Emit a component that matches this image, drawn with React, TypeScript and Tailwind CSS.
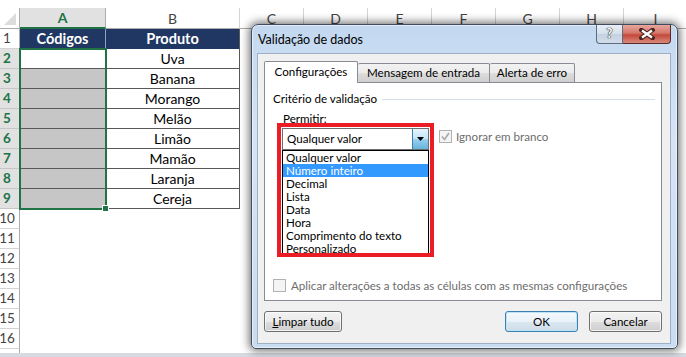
import React from "react";
import clsx from "clsx";

const products = ["Uva", "Banana", "Morango", "Melão", "Limão", "Mamão", "Laranja", "Cereja"];
const otherCols = ["C", "D", "E", "F", "G", "H", "I"];
const options = [
  "Qualquer valor",
  "Número inteiro",
  "Decimal",
  "Lista",
  "Data",
  "Hora",
  "Comprimento do texto",
  "Personalizado",
];

// Row number cell on the left edge of the sheet
const RowHeader = ({ n, selected }: { n: number; selected?: boolean }) => (
  <div
    className={clsx(
      "w-[20px] h-full shrink-0 border-r border-b flex items-center justify-center pr-[5px] text-[13.5px]",
      selected
        ? "bg-[#e1e1e1] text-[#217346] font-bold border-b-[#c6c6c6] border-r-[#ababab]"
        : "bg-white text-[#444] border-b-[#d4d4d4] border-r-[#ababab]"
    )}
  >
    {n}
  </div>
);

const Sheet = () => {
  return (
    <div className="relative flex flex-col [font-family:Lato,sans-serif]">
      <div className="h-[8px] bg-white" />

      {/* Column headers */}
      <div className="flex h-[21px] text-[14px] text-[#444]">
        <div className="w-[20px] shrink-0 border-r border-b border-[#ababab] bg-white relative">
          <svg width="19" height="20" className="absolute left-0 top-0">
            <polygon points="4,17 16,5 16,17" fill="#dcdcdc" />
          </svg>
        </div>
        <div className="w-[86px] shrink-0 flex items-center justify-center bg-[#e1e1e1] border-r border-r-[#ababab] border-b-2 border-b-[#217346] text-[#217346] font-bold">
          A
        </div>
        <div className="w-[134px] shrink-0 flex items-center justify-center bg-white border-r border-b border-[#d4d4d4] border-b-[#ababab]">
          B
        </div>
        {otherCols.map((c) => (
          <div
            key={c}
            className="w-[64px] shrink-0 flex items-center justify-center bg-white border-r border-b border-[#d4d4d4] border-b-[#ababab]"
          >
            {c}
          </div>
        ))}
      </div>

      {/* Row 1 - table header */}
      <div className="flex h-[20px]">
        <RowHeader n={1} />
        <div className="w-[86px] shrink-0 bg-[#203764] border-r border-[#8ea0bd] flex items-center justify-center text-white font-bold text-[14.5px]">
          Códigos
        </div>
        <div className="w-[134px] shrink-0 bg-[#203764] border-r border-[#595959] flex items-center justify-center text-white font-bold text-[14.5px]">
          Produto
        </div>
        <div className="flex-1 bg-white" />
      </div>

      {/* Rows 2-9 - data */}
      {products.map((p, i) => (
        <div key={p} className="flex h-[20px]">
          <RowHeader n={i + 2} selected />
          <div
            className={clsx(
              "w-[86px] shrink-0 border-r border-b border-[#595959]",
              i === 0 ? "bg-white" : "bg-[#c6c6c6]"
            )}
          />
          <div className="w-[134px] shrink-0 border-r border-b border-[#595959] bg-white flex items-center justify-center text-[14px] text-black">
            {p}
          </div>
          <div className="flex-1 bg-white" />
        </div>
      ))}

      {/* Rows 10-16 - empty */}
      {[10, 11, 12, 13, 14, 15, 16].map((n) => (
        <div key={n} className="flex h-[20px]">
          <RowHeader n={n} />
          <div className="flex-1 bg-white" />
        </div>
      ))}
      <div className="flex h-[4px]">
        <div className="w-[20px] border-r border-[#ababab] bg-white" />
        <div className="flex-1 bg-white" />
      </div>
      <div className="h-[4px] bg-[#d6dbe2]" />

      {/* Selection A2:A9 */}
      <div className="absolute left-[19px] top-[48px] w-[88px] h-[162px] border-2 border-[#217346] pointer-events-none" />
      <div className="absolute left-[102px] top-[205px] w-[7px] h-[7px] bg-[#217346] border border-white" />
    </div>
  );
};

const Checkbox = ({ checked }: { checked?: boolean }) => (
  <div className="w-[13px] h-[13px] shrink-0 border border-[#b1b1b1] bg-[#f4f4f4] flex items-center justify-center">
    {checked && (
      <svg width="9" height="9" viewBox="0 0 9 9">
        <path d="M1 4.5 L3.5 7.5 L8 1" fill="none" stroke="#a8a8a8" strokeWidth="1.6" />
      </svg>
    )}
  </div>
);

const winButton =
  "h-[21px] rounded-[3px] border text-[11.6px] text-black flex items-center justify-center";
const winButtonBg =
  "border-[#707070] bg-[linear-gradient(to_bottom,#f2f2f2_0%,#ebebeb_50%,#dddddd_51%,#cfcfcf_100%)] shadow-[inset_0_0_0_1px_rgba(255,255,255,0.7)]";

const Dialog = () => {
  return (
    <div className="absolute left-[251px] top-[24px] w-[427px] h-[325px] flex flex-col pl-[5px] pr-[6px] pb-[4px] rounded-t-[7px] rounded-b-[5px] border border-[#3e4c5e] bg-[linear-gradient(to_bottom,#c3d8f0,#d5e4f5_35%,#cadcf1)] shadow-[inset_0_0_0_1px_rgba(255,255,255,0.55),0_0_9px_2px_rgba(0,0,0,0.55)] [font-family:Lato,sans-serif] z-10">
      {/* Title bar */}
      <div className="relative h-[28px] flex items-center pl-[1px] pt-[2px] text-[12.5px] text-black">
        Validação de dados
        <div className="absolute right-0 top-0 flex">
          <div className="w-[27px] h-[19px] rounded-bl-[4px] border border-t-0 border-[#5d6b7e] bg-[linear-gradient(to_bottom,#e8eef6,#d5e0ec_50%,#c3d1e1_51%,#d2dde9)] flex items-center justify-center text-[13px] font-bold text-white [text-shadow:0_0_1px_#2a2a2a,0_0_1px_#2a2a2a,0_0_1px_#2a2a2a]">
            ?
          </div>
          <div className="w-[48px] h-[19px] rounded-br-[4px] border border-t-0 border-l-0 border-[#5a2a28] bg-[linear-gradient(to_bottom,#e8a69c,#d5776b_45%,#c4483b_55%,#d88a7c)] flex items-center justify-center">
            <svg width="16" height="12" viewBox="0 0 16 12">
              <path d="M2.5 2 L13.5 10 M13.5 2 L2.5 10" stroke="#4b2320" strokeWidth="4.5" strokeLinecap="square" />
              <path d="M3 2.5 L13 9.5 M13 2.5 L3 9.5" stroke="#ffffff" strokeWidth="2.4" />
            </svg>
          </div>
        </div>
      </div>

      {/* Client area */}
      <div className="flex-1 flex flex-col bg-[#f0f0f0] border border-[#9fb0c4] pl-[6px] pr-[8px] pt-[7px] text-[11.6px] text-black">
        {/* Tabs */}
        <div className="flex items-end h-[21px]">
          <div className="relative z-10 w-[94px] h-[22px] -mb-px bg-white border border-b-0 border-[#898c95] rounded-t-[2px] flex items-center justify-center pb-[2px]">
            Configurações
          </div>
          <div className="w-[132px] h-[19px] border border-b-0 border-l-0 border-[#898c95] rounded-t-[2px] bg-[linear-gradient(to_bottom,#f2f2f2_0%,#ebebeb_50%,#dddddd_51%,#cfcfcf_100%)] flex items-center justify-center">
            Mensagem de entrada
          </div>
          <div className="w-[85px] h-[19px] border border-b-0 border-l-0 border-[#898c95] rounded-t-[2px] bg-[linear-gradient(to_bottom,#f2f2f2_0%,#ebebeb_50%,#dddddd_51%,#cfcfcf_100%)] flex items-center justify-center">
            Alerta de erro
          </div>
        </div>

        {/* Tab panel */}
        <div className="relative h-[219px] bg-white border border-[#898c95] flex flex-col">
          <div className="mt-[8px] pl-[8px] pr-[6px] flex items-center h-[16px]">
            <span>Critério de validação</span>
            <div className="flex-1 h-px bg-[#d5dfe5] ml-[5px]" />
          </div>
          <div className="mt-[4px] pl-[18px] h-[16px] flex items-center">Permitir:</div>
          <div className="mt-[1px] pl-[17px] flex items-start">
            <div className="relative w-[147px] h-[22px] border border-[#6e6e6e] bg-white flex">
              <div className="flex-1 flex items-center pl-[4px]">Qualquer valor</div>
              <div className="w-[16px] h-full border-l border-[#3c7fb1] bg-[linear-gradient(to_bottom,#e5f4fc_0%,#c4e5f6_50%,#98d1ef_51%,#68b3db_100%)] flex items-center justify-center">
                <svg width="7" height="4" viewBox="0 0 7 4">
                  <polygon points="0,0 7,0 3.5,4" fill="#000" />
                </svg>
              </div>

              {/* Open dropdown list */}
              <div className="absolute left-[-1px] top-[21px] w-[147px] h-[106px] border border-black bg-white z-10 flex flex-col">
                {options.map((o, i) => (
                  <div
                    key={o}
                    className={clsx(
                      "h-[13px] leading-[13px] pl-[3px] whitespace-nowrap",
                      i === 1 ? "bg-[#3399ff] text-white" : "text-black"
                    )}
                  >
                    {o}
                  </div>
                ))}
              </div>
            </div>
            <div className="ml-[10px] mt-[2px] flex items-center gap-[4px] text-[#6d6d6d]">
              <Checkbox checked />
              <span className="leading-[13px]">Ignorar em branco</span>
            </div>
          </div>

          <div className="mt-auto mb-[8px] pl-[8px] flex items-center gap-[5px] text-[#6d6d6d]">
            <Checkbox />
            <span className="leading-[13px]">Aplicar alterações a todas as células com as mesmas configurações</span>
          </div>

          {/* Red annotation box */}
          <div className="absolute left-[12px] top-[40px] w-[157px] h-[134px] border-[4px] border-[#ec1c24] pointer-events-none z-20" />
        </div>

        {/* Buttons */}
        <div className="mt-[10px] flex items-center">
          <div className={clsx(winButton, winButtonBg, "w-[78px]")}>
            <span>
              <span className="underline">L</span>impar tudo
            </span>
          </div>
          <div
            className={clsx(
              winButton,
              "ml-auto w-[73px] border-[#3c7fb1] bg-[linear-gradient(to_bottom,#f4f9fc_0%,#e9f2f8_50%,#dae7f0_51%,#cddde9_100%)] shadow-[inset_0_0_0_1px_#bfe4f7]"
            )}
          >
            OK
          </div>
          <div className={clsx(winButton, winButtonBg, "ml-[11px] w-[73px]")}>Cancelar</div>
        </div>
      </div>
    </div>
  );
};

export default function App() {
  return (
    <div className="relative w-[686px] h-[357px] overflow-hidden bg-white">
      <Sheet />
      <Dialog />
    </div>
  );
}
